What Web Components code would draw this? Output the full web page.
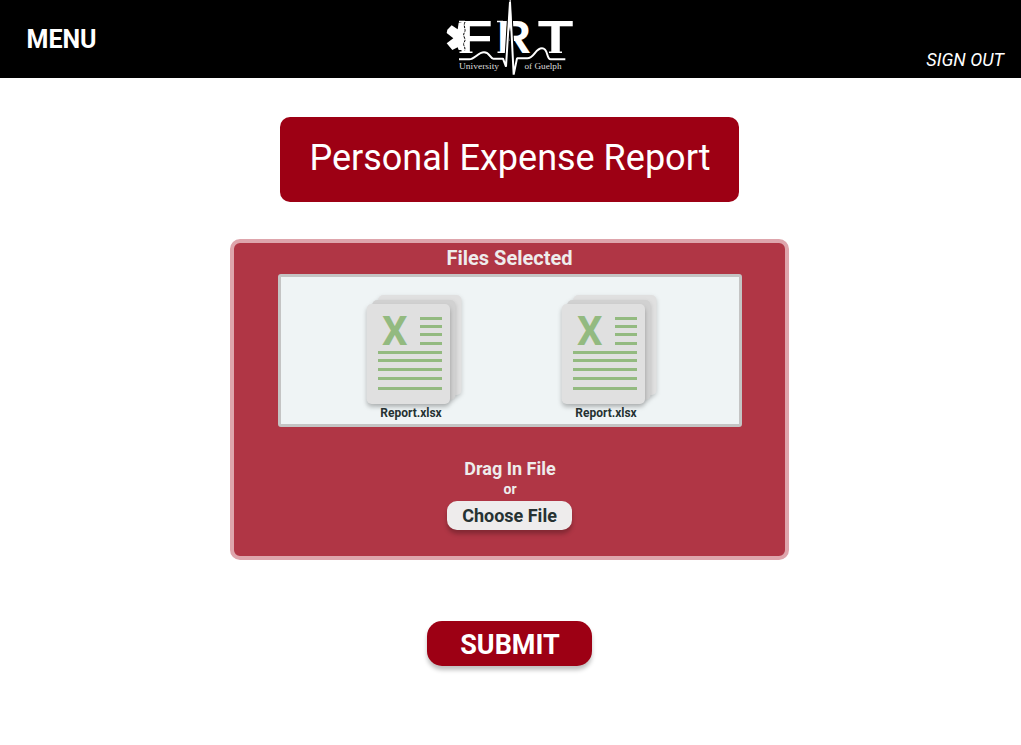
<!DOCTYPE html>
<html lang="en">
<head>
<meta charset="utf-8">
<title>Personal Expense Report</title>
<style>
body{margin:0;background:#fff;font-family:Roboto,sans-serif}
</style>
</head>
<body>
<expense-page></expense-page>
<script>
function define(name, html){
  const t=document.createElement('template');
  t.innerHTML=html;
  customElements.define(name, class extends HTMLElement{
    constructor(){super();this.attachShadow({mode:'open'}).append(t.content.cloneNode(true));}
  });
}

define('frt-logo', `
<style>
:host{display:block;width:140px;height:78px}
svg{display:block}
.l{font-family:"Liberation Sans",sans-serif;font-weight:bold;font-size:47px;fill:#fff}
.s{font-family:"Liberation Serif",serif;font-size:9px;fill:#ddd}
</style>
<svg width="140" height="78" viewBox="0 0 420 234">
  <g transform="scale(3)">
    <text class="l" x="17.7" y="53" textLength="35" lengthAdjust="spacingAndGlyphs">F</text>
    <text class="l" x="57" y="53" textLength="34" lengthAdjust="spacingAndGlyphs">R</text>
    <text class="l" x="97.8" y="53" textLength="35.6" lengthAdjust="spacingAndGlyphs">T</text>
    <path d="M19 21.5h6M19.5 52.2h13M57 21.5h6M57.500 52.2h10M109 52.2h13" stroke="#fff" stroke-width="1.6"/>
    <text class="s" x="19" y="68.5" textLength="40" lengthAdjust="spacingAndGlyphs">University</text>
    <text class="s" x="84.5" y="68.5" textLength="37" lengthAdjust="spacingAndGlyphs">of Guelph</text>
  </g>
  <path d="M22 89L35 76L53 88L56 68L72 66V150L56 150L53 142L37 150L20 130L40 115L20 99Z" fill="#fff"/>
  <path d="M75 66C68 80 80 88 73 98S80 116 73 126S78 140 74 152" fill="none" stroke="#000" stroke-width="3" stroke-dasharray="8 3"/>
  <path d="M189 176L198 200L210 6L221 224L231 175" fill="none" stroke="#000" stroke-width="12" stroke-linejoin="bevel"/>
  <path d="M57 178H88C104 178 114 157 132 157S150 176 160 176H189L198 200L210 6L221 224L231 175H262C282 175 286 145 306 145S318 178 332 178H376" fill="none" stroke="#fff" stroke-width="6" stroke-linejoin="bevel"/>
  <path d="M204 110L209 0H212L216 110L210 80Z" fill="#fff"/>
</svg>`);

define('app-header', `
<style>
:host{display:grid;grid-template-columns:1fr 140px 1fr;height:78px;background:#000;color:#fff;box-sizing:border-box;padding:0 17px 0 26.5px}
.menu{font-weight:700;font-size:25px;line-height:30px;padding-top:25px}
.out{font-style:italic;font-size:18px;line-height:22px;padding-top:49px;text-align:right}
frt-logo{margin-left:-5px}
</style>
<div class="menu">MENU</div><frt-logo></frt-logo><div class="out">SIGN OUT</div>`);

define('page-title', `
<style>
:host{display:block;box-sizing:border-box;width:459px;height:85px;border-radius:10px;background:#9d0014;color:#fff;font-size:36px;line-height:42px;padding:20px 0 0 1px;text-align:center;white-space:nowrap}
</style><slot></slot>`);

define('file-item', `
<style>
:host{display:block;width:120px;height:147px;color:#263232}
svg{display:block;overflow:visible}
.x{font:700 41px Roboto,sans-serif;fill:#93ba80}
.p{filter:drop-shadow(0 3px 2px rgba(0,0,0,.25))}
.q{filter:drop-shadow(0 2px 2px rgba(0,0,0,.18))}
.name{font-weight:700;font-size:12px;line-height:14px;text-align:center;margin-top:1px}
</style>
<svg width="120" height="128" viewBox="0 0 120 128">
  <rect class="q" x="27.2" y="18" width="83.3" height="100" rx="5" fill="#e0e0e0"/>
  <rect class="q" x="21.2" y="23" width="83.3" height="100" rx="5" fill="#d1d1d1"/>
  <rect class="p" x="15.7" y="27" width="83.3" height="100" rx="5" fill="#e0e0e0"/>
  <text class="x" x="31" y="68" textLength="25.5" lengthAdjust="spacingAndGlyphs">X</text>
  <path d="M69 41.5h22M69 49.5h22M69 57.5h22M69 66.5h22M27 75.5h64M27 83.5h64M27 92.5h64M27 101.5h64M27 111.5h64" stroke="#93ba80" stroke-width="3"/>
</svg>
<div class="name"><slot></slot></div>`);

define('file-list', `
<style>
:host{display:flex;box-sizing:border-box;width:464px;height:153px;border:3px solid #c4c4c4;border-radius:3px;background:#eff4f5;gap:75px;padding-left:70px}
</style><slot></slot>`);

define('pill-button', `
<style>
:host{display:block}
button{display:block;width:100%;height:100%;border:0;padding:0;margin:0;font:inherit;color:inherit;background:none}
</style><button type="button"><slot></slot></button>`);

define('upload-panel', `
<style>
:host{display:flex;flex-direction:column;align-items:center;box-sizing:border-box;width:559px;height:321px;border:4px solid #dea5ac;border-radius:10px;background:#b03645;color:#eeecec;font-weight:700}
.head{font-size:20px;line-height:24px;margin-top:3px;height:28px}
file-list{font-weight:400;margin-left:1px}
.drag{font-size:18px;line-height:22px;margin-top:31px;padding-left:1px}
.or{font-size:14px;line-height:16px;margin-top:1px;padding-left:1px}
pill-button{width:125px;height:29px;margin-top:4px;background:#eeecec;color:#263232;border-radius:10px;font-size:18px;line-height:29px;box-shadow:0 4px 4px rgba(0,0,0,.25)}
</style>
<div class="head">Files Selected</div>
<file-list><slot></slot></file-list>
<div class="drag">Drag In File</div>
<div class="or">or</div>
<pill-button>Choose File</pill-button>`);

define('expense-page', `
<style>
:host{display:block;height:745px;overflow:hidden}
main{display:flex;flex-direction:column;align-items:center;padding:39px 2px 0 0}
upload-panel{margin-top:37px}
.submit{box-sizing:border-box;width:165px;height:45px;margin-top:61px;padding:2px 0 0 1px;border-radius:15px;background:#9d0014;color:#fff;font-weight:700;font-size:27px;line-height:45px;box-shadow:0 4px 4px rgba(0,0,0,.25)}
</style>
<app-header></app-header>
<main>
<page-title>Personal Expense Report</page-title>
<upload-panel><file-item>Report.xlsx</file-item><file-item>Report.xlsx</file-item></upload-panel>
<pill-button class="submit">SUBMIT</pill-button>
</main>`);
</script>
</body>
</html>
